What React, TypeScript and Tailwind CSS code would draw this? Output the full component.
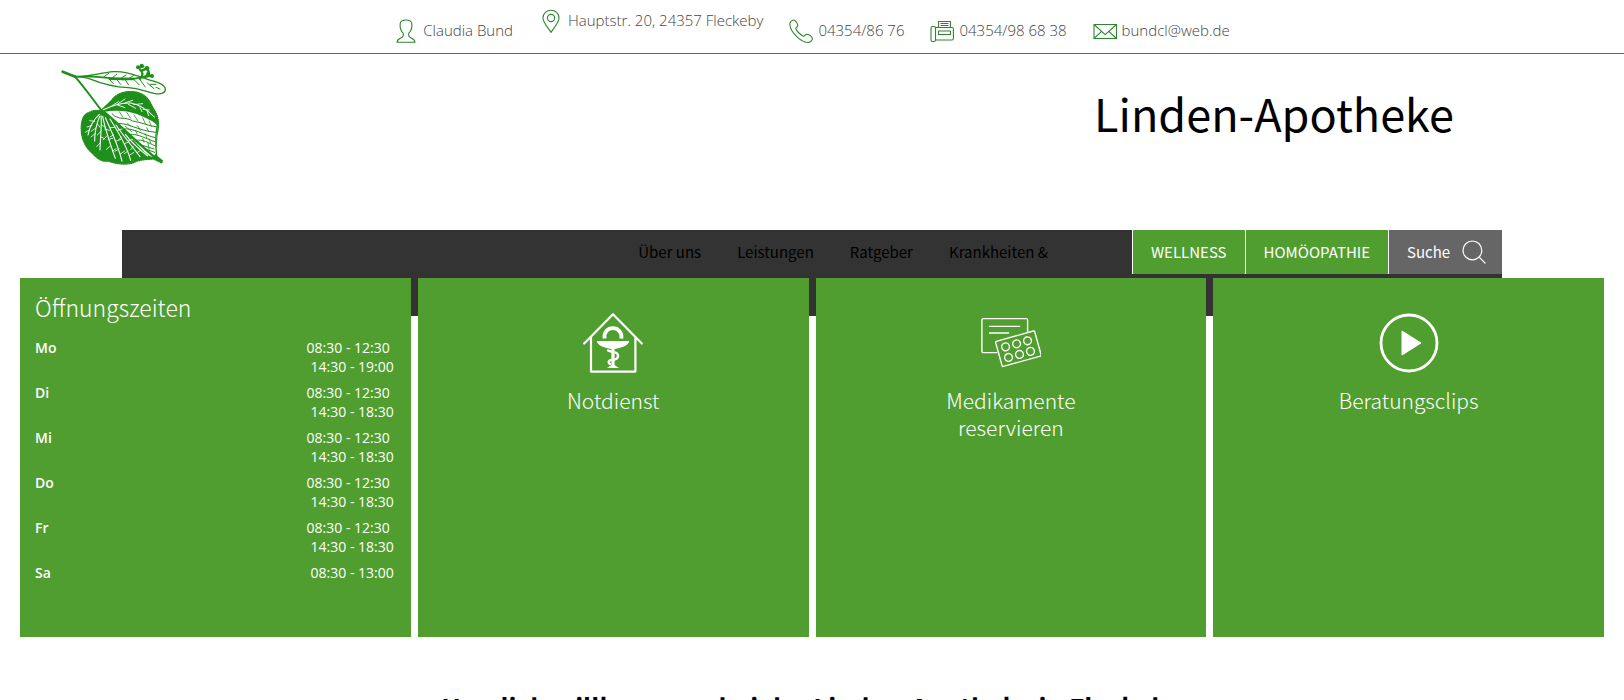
import type { ReactNode } from "react";

const green = "#1f8f1b";

function ContactIcon({ children }: { children: ReactNode }) {
  return (
    <svg viewBox="0 0 24 24" className="h-6 w-6 shrink-0" fill="none" stroke="#2f852f" strokeWidth="1.1" strokeLinejoin="round" aria-hidden="true">
      {children}
    </svg>
  );
}

const contacts = [
  {
    label: "Claudia Bund",
    pad: "pt-[19px]",
    icon: (
      <path d="M9 17.2 C9.6 16 9.6 15.2 9 14 C6.6 11.5 5.8 7 6.3 4.2 C6.8 1.8 9 1 12 1 C15 1 17.2 1.8 17.7 4.2 C18.2 7 17.4 11.5 15 14 C14.4 15.2 14.4 16 15 17.2 C16 19.2 20.5 19 21 23.2 L3 23.2 C3.5 19 8 19.2 9 17.2 Z" />
    ),
  },
  {
    label: "Hauptstr. 20, 24357 Fleckeby",
    pad: "pt-[9px]",
    icon: (
      <>
        <path d="M12 23.4 C9 18.5 4 13.5 4 9 C4 4.4 7.6 1.2 12 1.2 C16.4 1.2 20 4.4 20 9 C20 13.5 15 18.5 12 23.4 Z" />
        <circle cx="12" cy="9" r="3.6" />
      </>
    ),
  },
  {
    label: "04354/86 76",
    href: "tel:043548676",
    pad: "pt-[19px]",
    icon: (
      <path d="M1 4 C1.5 2 4 .6 5.6 1.2 C7.5 2.5 8.6 5 8.8 6.4 C8.8 8 6.8 8.4 6.8 9.6 C7.4 12 12 16.4 14.6 17.2 C16 17.2 16 15 18 15.2 C20 15.6 22.6 17.2 23.3 19 C23.6 21 21.6 23.4 19.4 23.4 C12 24 -.2 12 1 4 Z" />
    ),
  },
  {
    label: "04354/98 68 38",
    pad: "pt-[19px]",
    icon: (
      <>
        <path d="M5.5 8.5 H22 Q23.4 8.5 23.4 10 V19.5 Q23.4 21 22 21 H5.5" />
        <rect x="1" y="7.5" width="4.5" height="15" rx="1.6" />
        <path d="M8.5 8.5 V2.5 H20.5 V8.5 M10.5 4.5 H18.5 M10.5 6.5 H18.5 M8.5 12 H20.5 V15.5 H8.5 Z" />
      </>
    ),
  },
  {
    label: "bundcl@web.de",
    href: "mailto:bundcl@web.de",
    pad: "pt-[19px]",
    icon: (
      <>
        <rect x="1" y="5.5" width="22.5" height="14" />
        <path d="M1 5.5 L12.2 15.6 L23.5 5.5 M1 19.5 L8.6 12.4 M23.5 19.5 L15.8 12.4" />
      </>
    ),
  },
];

const hours = [
  ["Mo", "08:30 - 12:30", "14:30 - 19:00"],
  ["Di", "08:30 - 12:30", "14:30 - 18:30"],
  ["Mi", "08:30 - 12:30", "14:30 - 18:30"],
  ["Do", "08:30 - 12:30", "14:30 - 18:30"],
  ["Fr", "08:30 - 12:30", "14:30 - 18:30"],
  ["Sa", "08:30 - 13:00"],
];

function LeafLogo() {
  return (
    <svg viewBox="0 0 390 360" className="h-[120px] w-[130px]" fill="none" strokeLinecap="round" strokeLinejoin="round" role="img" aria-label="Lindenblatt">
      <g stroke={green}>
        <path d="M38 50 L76 65" strokeWidth="8" />
        <path d="M74 64 C100 92 130 135 154 166" strokeWidth="6" />
        <path d="M76 65 C115 62 160 66 200 72 C240 76 285 66 302 62" strokeWidth="5" />
        <path d="M76 65 C110 66 150 54 190 50 C225 47 255 60 285 70 C310 80 338 82 345 98 C350 112 335 120 312 115 C285 110 270 100 235 98 C190 96 150 84 115 70 C100 66 88 66 76 65" strokeWidth="4" />
        <path d="M160 67 L176 55 M185 70 L200 58 M210 72 L228 60 M235 72 L250 62 M175 70 L190 86 M200 73 L212 88 M226 75 L236 90 M252 74 L268 90 M270 74 L286 96 M292 84 L312 101 M300 88 L318 88 M318 97 L330 102" strokeWidth="3" />
        <path d="M180 71 L250 72" strokeWidth="8" />
        <path d="M270 72 C280 62 280 52 270 44 M283 66 C298 62 300 54 292 42 M292 64 L306 62 M266 38 L280 34 M276 47 L290 40" strokeWidth="7" />
      </g>
      <g fill={green}>
        <circle cx="264" cy="37" r="6" />
        <circle cx="275" cy="32" r="6" />
        <circle cx="291" cy="40" r="7" />
        <circle cx="306" cy="63" r="6" />
        <circle cx="294" cy="57" r="6" />
        <path d="M154 166 C164 154 178 145 188 132 C205 110 240 105 268 114 C300 126 302 150 315 168 C330 195 326 218 321 240 C319 270 315 285 320 303 L337 317 L335 324 L311 312 C285 313 265 315 245 325 C220 330 195 326 175 318 C150 322 138 305 124 292 C108 278 96 255 94 230 C92 200 98 178 118 172 C132 164 145 167 154 166 Z" stroke={green} strokeWidth="4" strokeDasharray="2 4" />
      </g>
      <path d="M164 170 C195 165 230 166 262 178 C285 188 310 198 323 212 C320 240 316 270 319 294 L309 306 C292 302 280 288 266 272 C235 238 200 196 164 170 Z" fill="#fff" />
      <g stroke={green} strokeWidth="3">
        <path d="M322 208 C316 240 316 270 320 303" strokeWidth="4" />
        <path d="M158 168 C205 205 262 264 320 312" strokeWidth="7" />
        <path d="M186 176 C204 198 228 184 248 198 C274 202 294 212 320 216 M202 206 C234 202 260 226 316 232 M222 222 C250 218 280 240 316 248 M240 238 C264 236 290 252 314 260 M258 256 C278 252 296 264 314 272 M274 270 L312 282 M286 282 L314 292" />
        <path d="M208 170 L218 186 M230 172 L242 190 M252 180 L264 198 M278 188 L286 206 M298 198 L304 214 M232 204 L242 214 M262 212 L272 226 M290 218 L296 230 M256 226 L262 238 M286 236 L290 248 M278 250 L282 262 M298 252 L302 264 M226 214 L246 230 M294 264 L298 286" strokeWidth="2.4" />
      </g>
      <g stroke="#fff" strokeWidth="3.2">
        <path d="M160 164 C185 152 215 142 242 144 C272 150 298 170 313 186" />
        <path d="M185 153 L205 140 M203 147 L225 132 M224 144 L248 136 M202 150 L225 158 M235 148 L257 160 M251 149 L278 146 M270 158 L276 170 M279 163 L298 165 M292 170 L296 182" strokeWidth="2.6" />
        <path d="M148 178 C135 190 120 208 114 240 M149 184 C138 210 134 230 134 258 M153 182 C156 210 151 245 150 285 M158 184 C165 220 178 260 196 310 M166 188 C180 220 203 265 216 318 M180 192 C198 220 230 270 242 316 M198 210 C218 240 250 278 270 305 M226 238 C244 262 272 286 293 303" />
        <path d="M134 199 L119 197 M126 211 L111 216 M119 224 L106 232 M142 206 L150 217 M137 219 L124 229 M136 235 L123 246 M154 208 L166 218 M154 228 L142 240 M154 246 L165 252 M151 263 L140 275 M164 222 L178 226 M170 243 L159 255 M175 253 L188 250 M181 273 L169 283 M187 289 L198 281 M181 218 L194 217 M190 240 L180 246 M199 258 L213 253 M207 282 L195 289 M211 297 L224 288 M202 226 L216 222 M214 246 L206 254 M224 266 L237 260 M234 288 L223 296 M239 300 L252 292 M235 256 L248 254 M249 275 L242 284 M261 293 L272 286" strokeWidth="2.4" />
      </g>
    </svg>
  );
}

function HouseIcon() {
  return (
    <svg viewBox="0 0 60 60" className="h-[60px] w-[60px]" fill="none" stroke="#fff" strokeLinecap="round" strokeLinejoin="round" aria-hidden="true">
      <path d="M1.2 30.5 L30 1.2 L58.8 30.5 M8 24 V58.6 H52.4 V24" strokeWidth="2.2" />
      <path d="M21.6 25.6 C19.6 11.6 40 11.6 38.4 25.6" strokeWidth="3.8" strokeLinecap="butt" />
      <path d="M13.6 28 H46.4 C45 33 38 35 31.6 36 V52 L36 55 H24 L28.4 52 V36 C22 35 15 33 13.6 28 Z" fill="#fff" stroke="none" />
      <path d="M25 37.4 L28 38.6 M32.5 39.5 C36 41 36 45 32 46.5 M28 47 C25 48 25 50 27 51" strokeWidth="2.4" />
    </svg>
  );
}

function MedicineIcon() {
  return (
    <svg viewBox="0 0 60 60" className="h-[60px] w-[60px]" fill="none" stroke="#fff" strokeWidth="1.4" strokeLinecap="round" strokeLinejoin="round" aria-hidden="true">
      <path d="M16 39.6 H2.4 Q.9 39.6 .9 38 V7 Q.9 5.6 2.4 5.6 H45 Q46.6 5.6 46.6 7 V18.2 M8.6 13.4 H38.6 M8.6 20 H27.6" />
      <g transform="translate(14.4 28.6) rotate(-15.5)">
        <rect x="0" y="0" width="40.5" height="26" rx="1" />
        <circle cx="8.4" cy="7.8" r="3.9" />
        <circle cx="19.8" cy="7.8" r="3.9" />
        <circle cx="31.2" cy="7.8" r="3.9" />
        <circle cx="8.4" cy="18.8" r="3.9" />
        <circle cx="19.8" cy="18.8" r="3.9" />
        <circle cx="31.2" cy="18.8" r="3.9" />
      </g>
    </svg>
  );
}

function PlayIcon() {
  return (
    <svg viewBox="0 0 60 60" className="h-[60px] w-[60px]" fill="none" aria-hidden="true">
      <circle cx="30" cy="30" r="28" stroke="#fff" strokeWidth="2.8" />
      <path d="M23 18 L42 30 L23 42 Z" fill="#fff" stroke="#fff" strokeLinejoin="round" />
    </svg>
  );
}

const tiles = [
  { title: "Notdienst", icon: <HouseIcon /> },
  { title: "Medikamente reservieren", icon: <MedicineIcon /> },
  { title: "Beratungsclips", icon: <PlayIcon /> },
];

export default function App() {
  return (
    <div className="bg-white font-['Open_Sans',sans-serif] text-black">
      <address className="flex h-[54px] justify-center gap-[26px] border-b border-[#3a833a] text-[15px] font-light leading-[22px] text-[#444] not-italic">
        {contacts.map((c) => (
          <div key={c.label} className={`flex items-start gap-[5px] ${c.pad}`}>
            <ContactIcon>{c.icon}</ContactIcon>
            {c.href ? <a href={c.href}>{c.label}</a> : <span>{c.label}</span>}
          </div>
        ))}
      </address>

      <header className="flex h-44 items-start justify-between pt-px pr-[170px] pl-[50px] font-['Noto_Sans_CJK_SC',sans-serif]">
        <a href="#start"><LeafLogo /></a>
        <span className="pt-[26px] text-[45px] leading-[64px]">Linden-Apotheke</span>
      </header>

      <nav className="mx-auto flex h-[86px] w-[85%] items-start justify-end bg-[#333] font-['Noto_Sans_CJK_SC',sans-serif] text-[15px] leading-[44px]">
        <div className="mr-[66px] flex">
          <a href="#ueber-uns" className="px-[18px]">Über uns</a>
          <a href="#leistungen" className="px-[18px]">Leistungen</a>
          <a href="#ratgeber" className="px-[18px]">Ratgeber</a>
          <a href="#krankheiten" className="px-[18px]">Krankheiten &amp;</a>
        </div>
        <a href="#wellness" className="border-l border-white bg-[#509e2f] px-[18px] text-white">WELLNESS</a>
        <a href="#homoeopathie" className="border-l border-white bg-[#509e2f] px-[18px] text-white">HOMÖOPATHIE</a>
        <button type="button" className="flex items-center gap-3 border-l border-white bg-[#666] pr-4 pl-[18px] text-white">
          Suche
          <svg viewBox="0 0 24 24" className="h-6 w-6" fill="none" stroke="#fff" strokeWidth="1.2" strokeLinecap="round" aria-hidden="true">
            <circle cx="10.4" cy="10.4" r="9.4" />
            <path d="M17.2 17.2 L23 23" />
          </svg>
        </button>
      </nav>

      <main>
        <div className="relative -mt-[38px] grid grid-cols-4 gap-[7px] px-5 text-white">
          <section className="h-[359px] bg-[#509e2f] px-[15px] pt-3">
            <h2 className="mb-[14px] font-['Noto_Sans_CJK_SC',sans-serif] text-[23px] font-extralight leading-[34px]">Öffnungszeiten</h2>
            <table className="w-full text-sm leading-[19px]">
              <tbody>
                {hours.map(([day, morning, afternoon]) => (
                  <tr key={day} className="align-top">
                    <th scope="row" className="pb-[7px] text-left font-semibold">{day}</th>
                    <td className="pr-0.5 pb-[7px] text-right">
                      <div className={afternoon ? "pr-1" : ""}>{morning}</div>
                      {afternoon && <div>{afternoon}</div>}
                    </td>
                  </tr>
                ))}
              </tbody>
            </table>
          </section>
          {tiles.map((t) => (
            <a key={t.title} href="#service" className="flex h-[359px] flex-col items-center bg-[#509e2f] pt-[35px]">
              {t.icon}
              <span className="mt-[14px] w-[180px] text-center font-['Noto_Sans_CJK_SC',sans-serif] text-[21px] font-extralight leading-[27px]">{t.title}</span>
            </a>
          ))}
        </div>
        <h1 className="mt-[50px] text-center font-['Noto_Sans_CJK_SC',sans-serif] text-[26px] font-bold leading-10">
          Herzlich willkommen bei der Linden-Apotheke in Fleckeby
        </h1>
      </main>
    </div>
  );
}
